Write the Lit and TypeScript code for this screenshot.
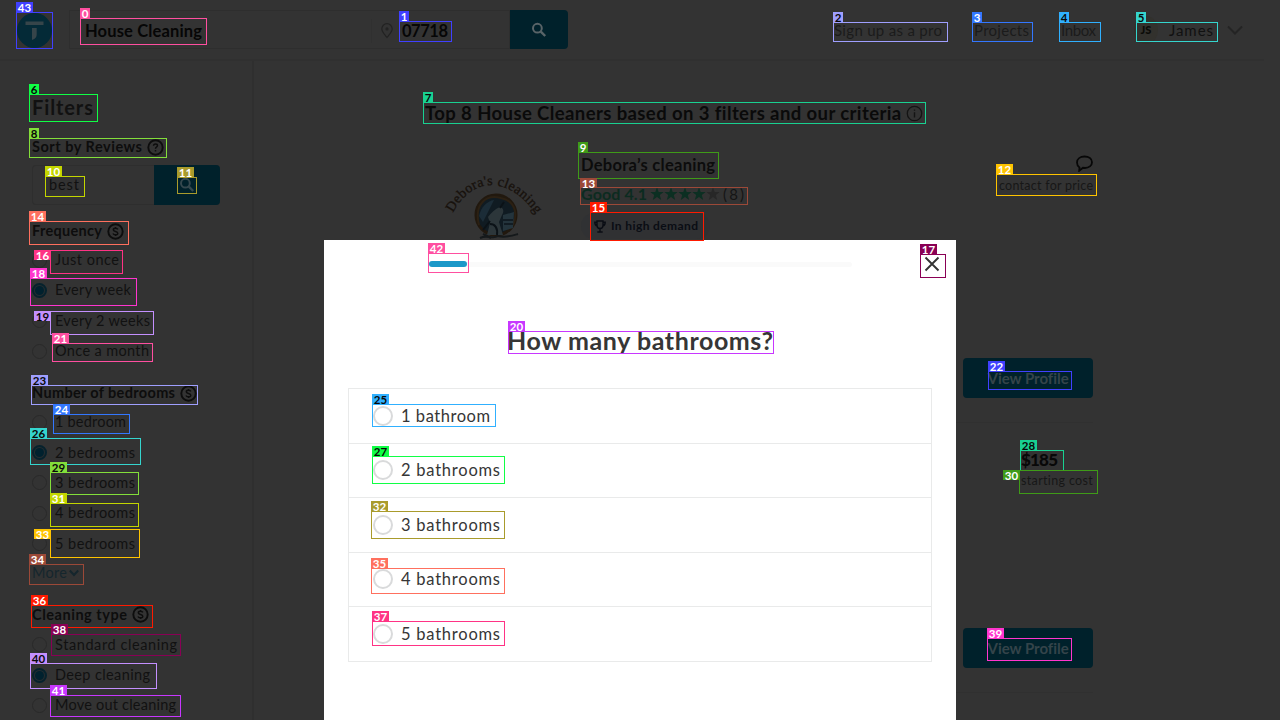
import { LitElement, html, svg, css } from "lit";
import { customElement, property } from "lit/decorators.js";

/** Text whose tracking is adjusted so that the line spans exactly `w` pixels. */
@customElement("fit-text")
class FitText extends LitElement {
  @property() text = "";
  @property({ type: Number }) w = 0;
  static styles = css`
    :host { display: inline-block; white-space: pre; flex: none; }
  `;
  updated() {
    const span = this.renderRoot.querySelector("span")!;
    const natural = span.getBoundingClientRect().width;
    const gaps = Math.max(1, this.text.length - 1);
    this.style.width = this.w + "px";
    span.style.letterSpacing = (this.w - natural) / gaps + "px";
  }
  render() { return html`<span>${this.text}</span>`; }
}

type Mark = [id: number, x: number, y: number, w: number, h: number, color: string, dark?: boolean, lx?: number, ly?: number];

const MARKS: Mark[] = [
  [43, 16, 12, 37, 37, "#4040ff"],
  [0, 80, 18, 127, 27, "#ff4fa0"],
  [1, 399, 21, 53, 21, "#4040ff"],
  [2, 833, 22, 115, 20, "#9f9fff", true],
  [3, 972, 22, 61, 20, "#3377ff"],
  [4, 1059, 22, 42, 20, "#30b0ff", true],
  [5, 1136, 22, 82, 20, "#35d5ce", true],
  [6, 29, 94, 69, 28, "#10ff45", true],
  [7, 423, 102, 503, 22, "#19d191", true],
  [8, 29, 138, 138, 20, "#83df3a", true, 29, 128],
  [9, 578, 152, 141, 27, "#3f9b18"],
  [10, 45, 176, 40, 21, "#c3d600"],
  [11, 177, 177, 20, 17, "#a99b2c"],
  [12, 996, 174, 101, 22, "#ffc400"],
  [13, 580, 187, 168, 18, "#9c4938", false, 580, 178],
  [14, 29, 221, 100, 24, "#ff705e"],
  [15, 590, 212, 114, 29, "#ff1a00"],
  [16, 50, 250, 73, 24, "#ff3385", false, 34, 250],
  [17, 920, 254, 26, 24, "#8a0055", false, 920, 244],
  [18, 30, 278, 107, 28, "#ff35ce"],
  [19, 50, 311, 104, 24, "#c490ff", true, 34, 311],
  [20, 508, 331, 266, 23, "#c837ff"],
  [21, 52, 343, 101, 19, "#ff4fa0"],
  [22, 988, 371, 84, 19, "#4040ff"],
  [23, 31, 385, 167, 20, "#9f9fff", true],
  [24, 53, 414, 77, 20, "#3377ff"],
  [25, 372, 404, 124, 23, "#30b0ff", true],
  [26, 30, 438, 111, 27, "#35d5ce", true],
  [27, 372, 456, 133, 28, "#10ff45", true],
  [28, 1020, 450, 44, 21, "#19d191", true],
  [29, 50, 472, 89, 23, "#83df3a", true],
  [30, 1019, 470, 79, 24, "#3f9b18", false, 1003, 470],
  [31, 50, 503, 89, 24, "#c3d600"],
  [32, 371, 511, 134, 28, "#a99b2c"],
  [33, 50, 529, 90, 29, "#ffc400", false, 34, 529],
  [34, 29, 564, 55, 21, "#9c4938"],
  [35, 371, 568, 134, 26, "#ff705e"],
  [36, 31, 605, 122, 23, "#ff1a00"],
  [37, 372, 621, 133, 25, "#ff3385"],
  [38, 51, 634, 130, 22, "#8a0055"],
  [39, 987, 638, 85, 23, "#ff35ce"],
  [40, 30, 663, 127, 26, "#c490ff", true],
  [41, 50, 695, 131, 22, "#c837ff"],
  [42, 428, 253, 41, 20, "#ff4fa0"],
];

const t = (text: string, w: number, cls = "") =>
  html`<fit-text class=${cls} .text=${text} .w=${w}></fit-text>`;

const searchIcon = html`<svg width="16" height="16" viewBox="0 0 16 16" fill="none" stroke="currentColor">
  <circle cx="6.4" cy="6.2" r="4.4" stroke-width="2"/><path d="M9.8 9.6 14.2 14" stroke-width="2.4"/></svg>`;

const ringIcon = (glyph: unknown) => html`<svg width="17" height="17" viewBox="0 0 17 17" fill="none" stroke="currentColor">
  <circle cx="8.5" cy="8.5" r="7.2" stroke-width="1.9"/>${glyph}</svg>`;
const dollarGlyph = svg`<path stroke-width="1.5" d="M10.9 6.4C10.4 5.5 9.6 5.2 8.5 5.2c-1.4 0-2.2.6-2.2 1.6 0 2.2 4.5 1.1 4.5 3.4 0 1-.9 1.6-2.3 1.6-1.200 0-2.100-.4-2.500-1.300M8.500 4v1.400M8.500 11.600V13"/>`;
const questionGlyph = svg`<path stroke-width="1.5" d="M6.500 6.800c.1-1.200.9-1.900 2-1.900s2 .7 2 1.700c0 1.400-2 1.500-2 3.100M8.500 11v1.500"/>`;

const starIcon = (cls: string) => html`<svg class=${cls} width="14" height="14" viewBox="0 0 14 14">
  <path fill="currentColor" d="M7 .3 8.700 5H13.700L9.800 8 11.200 13 7 10.100 2.800 13 4.200 8 .3 5H5.300Z"/></svg>`;

@customElement("app-root")
class AppRoot extends LitElement {
  static styles = css`
    :host { display: block; position: relative; width: 1280px; height: 720px; overflow: hidden;
      background: #333; color: #0c0c0c; font-family: Lato, "Noto Sans", sans-serif; font-size: 14.500px; line-height: 20px; }
    * { box-sizing: border-box; }
    svg { display: block; flex: none; }
    .page { display: flex; flex-direction: column; height: 720px; }
    .b { font-weight: 700; }
    .header { display: flex; height: 61px; border-bottom: 2px solid #303030; padding: 10px 0 0 16px; margin-right: 16px; flex: none; }
    .logo { margin: 2px 16px 0 0; }
    .search { display: flex; flex: none; width: 441px; height: 39px; border: 1px solid #2e2e2e; align-items: center; padding: 2px 0 0 15px; font-size: 16.500px; color: #060606; }
    .zip { display: flex; align-items: center; margin-left: auto; width: 138px; height: 24px; gap: 8px; padding-left: 8px; border-left: 1px solid #303030; }
    .pin { color: #222; }
    .go { flex: none; width: 58px; height: 39px; background: #00212b; border-radius: 0 4px 4px 0; display: flex; align-items: center; justify-content: center; color: #596468; }
    .nav { display: flex; align-items: center; flex: none; height: 40px; margin-left: 266px; color: #1b1b1b; font-size: 15px; }
    .gap32 { margin-left: 32px; }
    .user { display: flex; align-items: center; margin-left: 38px; gap: 11px; color: #111; }
    .avatar { width: 24px; height: 28px; border-radius: 50%; background: #32312d; color: #0b0b08; font-size: 11px; font-weight: 900; line-height: 12px; padding-bottom: 1px; display: flex; align-items: center; justify-content: center; }
    .chev { margin-left: 14px; color: #242424; }
    .body { display: flex; flex: 1; min-height: 0; }
    .side { width: 254px; border-right: 2px solid #2f2f2f; padding: 34px 0 0 32px; flex: none; color: #111; overflow: hidden; }
    .h1 { font-size: 20px; font-weight: 700; line-height: 24px; height: 24px; }
    .h2 { display: flex; align-items: center; height: 20px; gap: 5px; font-size: 14.500px; font-weight: 700; color: #0d0d0d; }
    .sort { margin-top: 18px; }
    .find { display: flex; width: 188px; height: 40px; margin-top: 8px; border: 1px solid #2e2e2e; border-right: 0; border-radius: 4px; align-items: center; padding-left: 16px; }
    .findgo { margin-left: auto; width: 66px; height: 40px; background: #00212b; color: #35484e; border-radius: 0 4px 4px 0; display: flex; align-items: center; justify-content: center; }
    .freq { margin-top: 16px; }
    .beds { margin-top: 17px; }
    .type { margin-top: 22px; }
    .opts { padding-top: 4px; }
    .last { padding-top: 5px; }
    .opt { display: flex; align-items: center; gap: 8px; height: 30.300px; }
    .radio { width: 15px; height: 15px; border: 1px solid #292929; border-radius: 50%; display: flex; align-items: center; justify-content: center; }
    .on { border: 2px solid #06222d; background: #252d30; }
    .on::after { content: ""; width: 9px; height: 9px; border-radius: 50%; background: #00212e; }
    .more { display: flex; align-items: center; gap: 2px; height: 20px; color: #15262d; margin-top: 4px; }
    .main { flex: 1; padding: 42px 187px 0 171px; display: flex; flex-direction: column; }
    .heading { display: flex; align-items: center; height: 20px; gap: 5px; font-size: 18.500px; font-weight: 700; color: #0a0a0a; }
    .card { display: flex; height: 300px; border-bottom: 1px solid #303030; flex: none; }
    .pic { margin: 49px 0 0 17px; }
    .info { margin: 32px 0 0 33px; display: flex; flex-direction: column; }
    .name { font-size: 16.500px; font-weight: 700; height: 20px; }
    .rating { display: flex; align-items: center; height: 20px; margin-top: 9px; }
    .good { font-size: 16px; font-weight: 700; color: #0c2b20; }
    .stars { display: flex; margin-left: 3px; margin-right: 3px; color: #0c2f22; }
    .off { color: #272727; }
    .count { font-size: 15px; color: #151515; }
    .pill { display: flex; align-items: center; gap: 5px; width: 129px; height: 26px; padding-left: 13px; margin-top: 9px; border-radius: 13px; background: #303133; font-size: 12px; font-weight: 700; color: #0a0d14; }
    .side-r { margin-left: auto; display: flex; flex-direction: column; align-items: flex-end; font-size: 12.500px; color: #171717; }
    .chat { margin: 32px 0 0 0; color: #070707; }
    .contact { margin-top: 4px; height: 20px; }
    .cta { width: 130px; height: 40px; margin-top: auto; margin-bottom: 24px; border-radius: 4px; background: #00212b; color: #34444a; font-size: 15px; font-weight: 700; display: flex; align-items: center; justify-content: center; }
    .second { height: 270px; }
    .price { font-size: 17px; font-weight: 900; color: #080808; height: 20px; margin-top: 27px; width: 72px; }
    .start { margin-top: 1px; }
    .modal { position: absolute; left: 324px; top: 240px; width: 632px; height: 480px; background: #fff; color: #363636; padding: 0 16px 0 24px; display: flex; flex-direction: column; }
    .bar { display: flex; align-items: center; height: 48px; padding-left: 81px; }
    .track { flex: none; width: 423px; height: 5px; border-radius: 3px; background: #fafafa; display: flex; align-items: center; }
    .fill { width: 38px; height: 6px; border-radius: 3px; background: #1b98c8; }
    .close { margin-left: 72px; }
    .ask { text-align: center; font-size: 25px; font-weight: 700; line-height: 32px; margin: 36px 8px 0 0; height: 32px; color: #363636; }
    .list { margin: 32px 8px 0 0; border: 1px solid #e9eaea; border-bottom: 0; }
    .row { height: 54.500px; border-bottom: 1px solid #e9eaea; display: flex; align-items: center; gap: 8px; padding-left: 24px; font-size: 16.500px; }
    .big { width: 20px; height: 20px; border: 2px solid #d9dadb; border-radius: 50%; }
    .mark { position: absolute; border: 1px solid; }
    .tag { position: absolute; height: 10px; line-height: 11px; font-size: 11.500px; font-weight: 700; color: #fff; text-align: center; padding: 0; }
    .dark { color: #080808; }
  `;

  private opt(label: string, w: number, on = false) {
    return html`<div class="opt"><span class="radio ${on ? "on" : ""}"></span>${t(label, w)}</div>`;
  }

  private header() {
    return html`<div class="header">
      <svg class="logo" width="37" height="37" viewBox="0 0 37 37"><circle cx="18.500" cy="18.500" r="17.500" fill="#042a37"/>
        <path d="M9.500 9.500h18v3.500h-18zM16 16h4.700v6.500c0 2.500-1.200 4.500-4.700 5.500z" fill="#36454a"/></svg>
      <div class="search">${t("House Cleaning", 117, "b")}
        <div class="zip"><svg class="pin" width="14" height="16" viewBox="0 0 14 16" fill="none" stroke="currentColor" stroke-width="1.200"><path d="M7 14.500C4 10.500 1.800 8.500 1.800 5.900a5.200 5.200 0 0 1 10.400 0C12.200 8.500 10 10.500 7 14.500Z"/><circle cx="7" cy="5.900" r="1"/></svg>${t("07718", 46, "b")}</div>
      </div>
      <div class="go">${searchIcon}</div>
      <div class="nav">${t("Sign up as a pro", 108)}${t("Projects", 55, "gap32")}${t("Inbox", 35, "gap32")}
        <div class="user"><span class="avatar">JS</span>${t("James", 44)}</div>
        <svg class="chev" width="16" height="10" viewBox="0 0 16 10" fill="none" stroke="currentColor" stroke-width="2"><path d="M1 1.500 8 8.500 15 1.500"/></svg>
      </div>
    </div>`;
  }

  private sidebar() {
    return html`<div class="side">
      <div class="h1">${t("Filters", 61)}</div>
      <div class="h2 sort">${t("Sort by Reviews", 110)}${ringIcon(questionGlyph)}</div>
      <div class="find">${t("best", 30)}<div class="findgo">${searchIcon}</div></div>
      <div class="h2 freq">${t("Frequency", 70)}${ringIcon(dollarGlyph)}</div>
      <div class="opts">${this.opt("Just once", 64)}${this.opt("Every week", 76, true)}${this.opt("Every 2 weeks", 95)}${this.opt("Once a month", 94)}</div>
      <div class="h2 beds">${t("Number of bedrooms", 143)}${ringIcon(dollarGlyph)}</div>
      <div class="opts">${this.opt("1 bedroom", 71)}${this.opt("2 bedrooms", 80, true)}${this.opt("3 bedrooms", 80)}${this.opt("4 bedrooms", 80)}${this.opt("5 bedrooms", 80)}</div>
      <div class="more">${t("More", 35)}<svg width="10" height="8" viewBox="0 0 10 8" fill="none" stroke="currentColor" stroke-width="2"><path d="M.8 1.500 5 6 9.200 1.500"/></svg></div>
      <div class="h2 type">${t("Cleaning type", 95)}${ringIcon(dollarGlyph)}</div>
      <div class="opts last">${this.opt("Standard cleaning", 122)}${this.opt("Deep cleaning", 95, true)}${this.opt("Move out cleaning", 121)}</div>
    </div>`;
  }

  private picture() {
    return html`<svg class="pic" width="106" height="68" viewBox="0 0 106 68" overflow="visible">
      <path id="arc" d="M11 41C30 4 67 4 93 41" fill="none"/>
      <text font-family="Liberation Serif, serif" font-size="14" fill="#17110c" stroke="#17110c" stroke-width=".3"><textPath href="#arc" textLength="105">Debora's cleaning</textPath></text>
      <circle cx="54" cy="43" r="20" fill="#101b22" stroke="#21180e" stroke-width="3"/>
      <path d="M37 53C32 33 43 22 59 26 73 29 76 41 71 53" fill="none" stroke="#2b2013" stroke-width="2"/>
      <path d="M37 44c2-9 8-15 15-16l-5 10-6 12z" fill="#1b2c37"/>
      <path d="M46 45c3-4 7-8 12-10 4 1 4 5 2 8l-3 7 4 13H45l3-12z" fill="#2c363a"/>
      <path d="m61 43 11-3-1 16-10 3z" fill="#24343c"/><path d="M61 48h10M62 52h9" stroke="#0c151b" stroke-width="1.500"/>
      <path d="M48 52c5 0 8 4 7 11M58 36l4-6M41 58l7-9" stroke="#0b1217" stroke-width="2" fill="none"/>
      <path d="M38 66c8-4 12 2 18-2 7 2 13 0 20-2M41 62l8 4" stroke="#15191b" stroke-width="2" fill="none"/></svg>`;
  }

  private main() {
    return html`<div class="main">
      <div class="heading">${t("Top 8 House Cleaners based on 3 filters and our criteria", 476)}
        <svg width="17" height="17" viewBox="0 0 17 17" fill="none" stroke="#141414"><circle cx="8.500" cy="8.500" r="7.200" stroke-width="1.300"/><path d="M8.500 7.200v5.300M8.500 4.500v1.300" stroke-width="1.400"/></svg></div>
      <div class="card">
        ${this.picture()}
        <div class="info">
          <div class="name">${t("Debora’s cleaning", 134)}</div>
          <div class="rating">${t("Good 4.1", 66, "good")}<span class="stars">${[0, 1, 2, 3].map(() => starIcon("full"))}${starIcon("off")}</span>${t("(8)", 21, "count")}</div>
          <div class="pill"><svg width="12" height="13" viewBox="0 0 12 13" fill="none" stroke="currentColor" stroke-width="1.400"><path d="M3 1h6v4.500a3 3 0 0 1-6 0ZM3 2.200H.8c0 2.300.8 3.500 2.400 3.800M9 2.200h2.200c0 2.300-.8 3.500-2.400 3.800M6 8.500V12M3.300 12h5.400"/></svg>${t("In high demand", 87)}</div>
        </div>
        <div class="side-r">
          <svg class="chat" width="17" height="17" viewBox="0 0 17 17" fill="none" stroke="currentColor" stroke-width="1.800"><path d="M3.200 15.800 3.500 12.500C1.800 11.300 1 9.500 1 7.500 1 3.800 4.200 1.500 8.500 1.500S16 3.700 16 7.200s-3.200 5.800-7 5.800L7 12.800Z"/></svg>
          <div class="contact">${t("contact for price", 94)}</div>
          <div class="cta">${t("View Profile", 81)}</div>
        </div>
      </div>
      <div class="card second"><div class="side-r">
        <div class="price">${t("$185", 37)}</div>
        ${t("starting cost", 72, "start")}
        <div class="cta">${t("View Profile", 81)}</div>
      </div></div>
    </div>`;
  }

  private modal() {
    return html`<div class="modal">
      <div class="bar"><div class="track"><div class="fill"></div></div>
        <svg class="close" width="16" height="16" viewBox="0 0 16 16" stroke="#333" stroke-width="1.900"><path d="m1.500 1.500 13 13M14.500 1.500l-13 13"/></svg></div>
      <div class="ask">${t("How many bathrooms?", 266)}</div>
      <div class="list">${[1, 2, 3, 4, 5].map((n) => html`<div class="row"><span class="big"></span>${t(n + (n > 1 ? " bathrooms" : " bathroom"), n > 1 ? 99 : 89)}</div>`)}</div>
    </div>`;
  }

  private mark([id, x, y, w, h, color, dark, lx, ly]: Mark) {
    const lw = id > 9 ? 17 : 10;
    return html`<div class="mark" style="left:${x}px;top:${y}px;width:${w}px;height:${h}px;border-color:${color}"></div>
      <div class="tag ${dark ? "dark" : ""}" style="left:${lx ?? x}px;top:${ly ?? y - 10}px;width:${lw}px;background:${color}">${id}</div>`;
  }

  render() {
    return html`<div class="page">${this.header()}<div class="body">${this.sidebar()}${this.main()}</div></div>
      ${this.modal()}${MARKS.map((m) => this.mark(m))}`;
  }
}
